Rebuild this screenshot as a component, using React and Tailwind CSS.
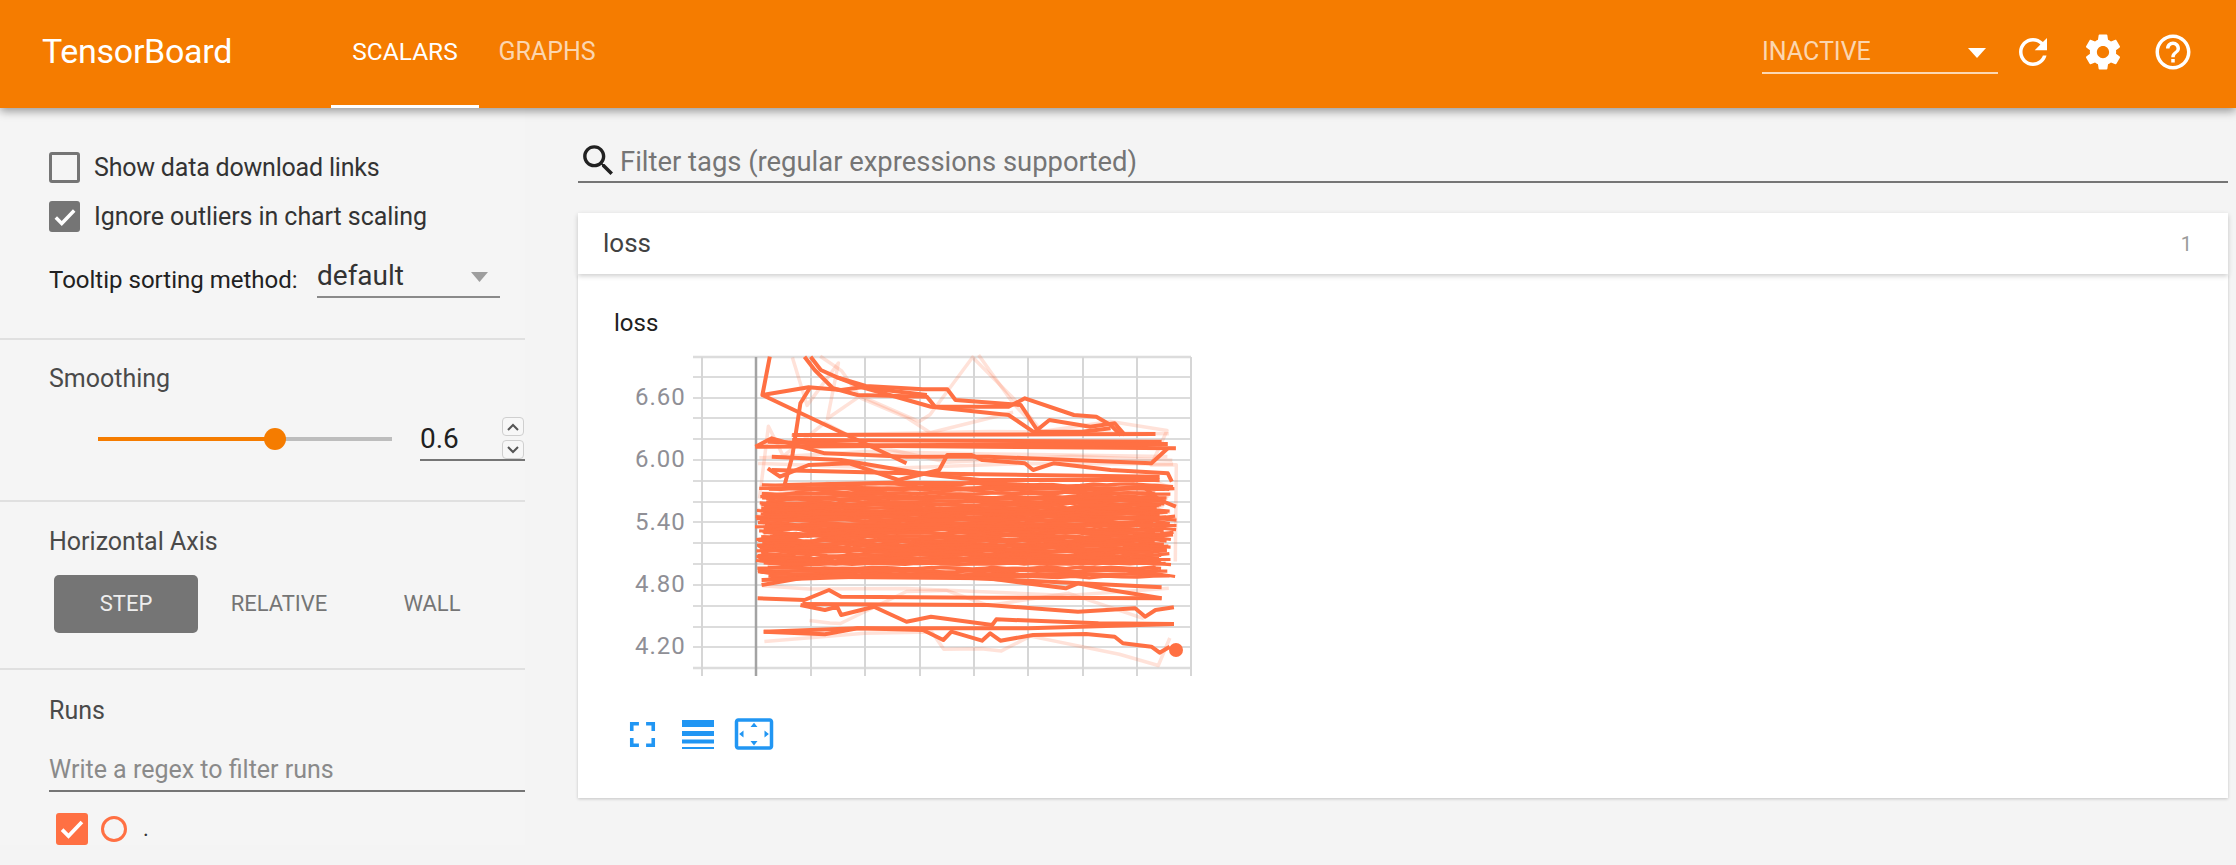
import React from "react";

const rng = (seed) => () => {
  seed |= 0; seed = (seed + 0x6d2b79f5) | 0;
  let t = Math.imul(seed ^ (seed >>> 15), 1 | seed);
  t = (t + Math.imul(t ^ (t >>> 7), 61 | t)) ^ t;
  return ((t ^ (t >>> 14)) >>> 0) / 4294967296;
};
const r = rng(42);

// traced strokes, written as [x, y] pairs in chart-space units (x / 2.45, y / 3)
const traced = [
  [465,170,447,285,560,262,640,270,690,262,850,285],
  [447,285,800,490],
  [550,170,575,210,620,265,680,285,850,290,870,320,1050,320,1090,295,1210,345,1265,350,1300,375,1325,405],
  [565,170,590,210,630,232,700,258,840,268,900,268,920,300,1080,315,1120,390,1150,360,1250,380,1310,370,1335,405],
  [630,232,700,265,860,320,1050,345,1110,395,1230,395,1300,385],
  [565,260,540,310,520,470,500,560],
  [520,405,1410,402],[520,420,1425,425],[430,440,760,438,1460,445],[460,425,720,436,1440,432],
  [430,440,470,415,600,460,800,470,1000,470,1400,490,1440,445],
  [460,505,490,530,560,495,660,490,780,540,880,510,900,465,960,465,985,480,1090,490,1110,510,1160,490,1300,510,1440,520,1450,545],
  [470,510,800,520,1100,525,1420,530],
  [470,470,640,480,860,525,980,540,1420,540],
  [500,555,760,548,1000,550,1210,560,1225,590,1300,570,1380,560,1420,600,1460,620],
  [435,895,550,900,610,870,640,890,1000,893,1425,895],
  [540,915,600,930,630,920,640,945,720,920,800,965,860,950,1010,975,1020,958,1270,970,1455,972],
  [545,912,1000,915,1220,935,1360,925,1385,950,1410,930,1455,922],
  [450,995,600,1003,680,985,840,990,890,1020,910,995,985,1022,1005,1000,1030,1022,1110,1005,1240,1002,1310,1010,1330,1030,1400,1040,1420,1058,1445,1040],
  [450,995,680,985,1100,985,1455,972],
  [445,855,560,830,1000,835,1190,865,1220,850,1300,870,1425,895],
  [445,840,800,825,1150,845,1425,862],
];
const band = [];
const addBand = (count, lo, hi) => {
  for (let i = 0; i < count; i++) {
    const base = lo + ((i + r() * 1.4) / count) * (hi - lo);
    const x0 = 428 + r() * 40, x1 = 1400 + r() * 62, n = 22 + Math.floor(r() * 14), pts = [];
    for (let j = 0; j <= n; j++) {
      const spike = r() < 0.08 ? 11 : 3;
      pts.push(x0 + ((x1 - x0) * j) / n, base + (r() - 0.5) * spike * 2);
    }
    band.push(pts);
  }
};
addBand(9, 550, 600);
addBand(44, 600, 790);
addBand(8, 790, 835);
const toPts = (a, jitter = 0) => {
  const out = [];
  for (let i = 0; i < a.length; i += 2)
    out.push(`${(580 + a[i] / 2.45 + (r() - 0.5) * jitter).toFixed(1)},${(300 + a[i + 1] / 3 + (r() - 0.5) * jitter * 1.6).toFixed(1)}`);
  return out.join(" ");
};
const bandLines = band.map((a) => toPts(a));
const tracedLines = traced.map((a) => toPts(a));
const ghost = [
  [520,170,560,320,630,190,610,350,690,290,830,370,860,340,960,170,1080,320,1130,400,1300,360,1440,390,1400,490,1460,500,1460,780],
  [440,590,460,380,500,470,600,370,700,430,900,480,1200,470,1450,480],
  [450,1025,700,1005,860,1000,890,1050,985,1050,1030,1060,1100,1010,1320,1070,1418,1090,1445,1010],
  [590,170,640,210,690,300,800,350,860,400,1060,330],
  [975,170,1060,320,1130,395],
  [560,965,610,970,640,965,800,870,900,870,1000,920,1200,880,1380,960],
  [450,850,560,860,800,860,1190,880,1440,860],
  [440,470,700,460,1000,455,1440,470],
  [440,490,760,500,1100,485,1450,495],
  [520,405,1000,400,1440,400],
].concat(band.slice(0, 24)).map((a) => toPts(a, 3));

const hGrid = [357,377,398,418,439,460,481,502,522,543,564,585,606,627,647,668];
const vGrid = [702,756,811,865,920,974,1028,1083,1137,1191];
const yLabels = [["6.60",396],["6.00",458],["5.40",521],["4.80",583],["4.20",645]];

const Chart = () => (
  <svg width="570" height="340" viewBox="630 350 570 340" className="ml-[52px] mt-[13px] block">
    {hGrid.map((y) => <line key={y} x1="693" x2="1191" y1={y} y2={y} stroke="#dcdcdc" strokeWidth={y === 357 || y === 668 ? 2.5 : 2} />)}
    {vGrid.map((x) => <line key={x} x1={x} x2={x} y1="357" y2="676" stroke={x === 756 ? "#a3a3a3" : "#d6d6d6"} strokeWidth={x === 756 ? 2.5 : 2} />)}
    {yLabels.map(([t, y]) => <text key={t} x="635" y={y + 9} fontFamily="Roboto, sans-serif" fontSize="24" letterSpacing="1" fill="#8f8f96">{t}</text>)}
    <g fill="none" strokeLinejoin="round">
      {ghost.map((p, i) => <polyline key={i} points={p} stroke="#ff7043" strokeOpacity="0.2" strokeWidth="3.5" />)}
      {bandLines.map((p, i) => <polyline key={i} points={p} stroke="#ff7043" strokeWidth="3.2" />)}
      {tracedLines.map((p, i) => <polyline key={i} points={p} stroke="#ff7043" strokeWidth="4" />)}
    </g>
    <circle cx="1176" cy="650" r="7" fill="#ff7043" />
  </svg>
);

const Icon = ({ d, size = 42, className = "" }) => (
  <svg width={size} height={size} viewBox="0 0 24 24" fill="currentColor" className={className}><path d={d} /></svg>
);
const Check = ({ className }) => (
  <svg viewBox="0 0 24 24" className={className} fill="none" stroke="#fff" strokeWidth="3.2"><path d="M3.5 12.5l5.5 5.5L20.5 6" /></svg>
);

export default function App() {
  return (
    <div className="h-[865px] w-[2236px] overflow-hidden bg-[#f4f4f4] font-['Roboto',sans-serif] text-[#212121]">
      <header className="relative z-20 flex h-[108px] bg-[#f57c00] text-white shadow-[0_3px_9px_rgba(0,0,0,0.4)]">
        <div className="w-[331px] pl-[42px] pt-[28px] text-[34px] leading-[46px] tracking-[-0.3px]">TensorBoard</div>
        <div className="flex h-[108px] w-[148px] justify-center border-b-[3px] border-white pt-[34px] text-[24.5px] leading-[36px]">SCALARS</div>
        <div className="flex h-[108px] w-[136px] justify-center pt-[34px] text-[25px] leading-[36px] text-white/70">GRAPHS</div>
        <div className="ml-auto mt-[30px] flex h-[44px] w-[236px] items-start justify-between border-b-2 border-white/70 pr-[12px] text-[25px] leading-[36px] text-white/70">
          <span className="mt-[4px]">INACTIVE</span>
          <svg width="18" height="10" viewBox="0 0 18 10" className="mt-[18px]"><path d="M0 0h18L9 10z" fill="#fff" /></svg>
        </div>
        <div className="flex w-[70px] justify-center pt-[31px]"><Icon d="M17.65 6.35C16.2 4.9 14.21 4 12 4c-4.42 0-7.99 3.58-7.99 8s3.57 8 7.99 8c3.73 0 6.84-2.55 7.73-6h-2.08c-.82 2.33-3.04 4-5.65 4-3.31 0-6-2.69-6-6s2.69-6 6-6c1.66 0 3.14.69 4.22 1.78L13 11h7V4l-2.35 2.35z" /></div>
        <div className="flex w-[70px] justify-center pt-[31px]"><Icon d="M19.43 12.98c.04-.32.07-.64.07-.98s-.03-.66-.07-.98l2.11-1.65c.19-.15.24-.42.12-.64l-2-3.46c-.12-.22-.39-.3-.61-.22l-2.49 1c-.52-.4-1.08-.73-1.69-.98l-.38-2.65C14.46 2.18 14.25 2 14 2h-4c-.25 0-.46.18-.49.42l-.38 2.65c-.61.25-1.17.59-1.69.98l-2.49-1c-.23-.09-.49 0-.61.22l-2 3.46c-.13.22-.07.49.12.64l2.11 1.65c-.04.32-.07.65-.07.98s.03.66.07.98l-2.11 1.65c-.19.15-.24.42-.12.64l2 3.46c.12.22.39.3.61.22l2.49-1c.52.4 1.08.73 1.69.98l.38 2.65c.03.24.24.42.49.42h4c.25 0 .46-.18.49-.42l.38-2.65c.61-.25 1.17-.59 1.69-.98l2.49 1c.23.09.49 0 .61-.22l2-3.46c.12-.22.07-.49-.12-.64l-2.11-1.65zM12 15.5c-1.93 0-3.5-1.57-3.5-3.5s1.57-3.5 3.5-3.5 3.5 1.57 3.5 3.5-1.57 3.5-3.5 3.5z" /></div>
        <div className="flex w-[70px] justify-center pt-[31px]"><Icon d="M11 18h2v-2h-2v2zm1-16C6.48 2 2 6.48 2 12s4.48 10 10 10 10-4.48 10-10S17.52 2 12 2zm0 18c-4.41 0-8-3.59-8-8s3.59-8 8-8 8 3.59 8 8-3.59 8-8 8zm0-14c-2.21 0-4 1.79-4 4h2c0-1.1.9-2 2-2s2 .9 2 2c0 2-3 1.75-3 5h2c0-2.25 3-2.5 3-5 0-2.21-1.79-4-4-4z" /></div>
        <div className="w-[28px]" />
      </header>

      <div className="flex">
        <aside className="w-[525px] shrink-0 bg-[#f5f5f5] text-[25px]">
          <section className="h-[232px] border-b-2 border-[#e0e0e0] pl-[49px] pt-[44px]">
            <div className="flex h-[31px] items-center">
              <span className="h-[31px] w-[31px] rounded-[3px] border-[3px] border-[#757575]" />
              <span className="ml-[14px] tracking-[-0.2px] text-[#333]">Show data download links</span>
            </div>
            <div className="mt-[18px] flex h-[31px] items-center">
              <span className="flex h-[31px] w-[31px] items-center justify-center rounded-[3px] bg-[#757575]"><Check className="h-[26px] w-[26px]" /></span>
              <span className="ml-[14px] tracking-[-0.08px] text-[#333]">Ignore outliers in chart scaling</span>
            </div>
            <div className="mt-[24px] flex items-start">
              <span className="mt-[8px] w-[268px] text-[24px] leading-[32px] text-[#212121]">Tooltip sorting method:</span>
              <div className="flex h-[42px] w-[183px] items-start justify-between border-b-2 border-[#8a8a8a] pr-[12px] text-[28px] leading-[36px] text-[#333]">
                <span className="mt-[2px]">default</span>
                <svg width="17" height="10" viewBox="0 0 17 10" className="mt-[16px]"><path d="M0 0h17L8.5 10z" fill="#9e9e9e" /></svg>
              </div>
            </div>
          </section>

          <section className="h-[162px] border-b-2 border-[#e0e0e0] pl-[49px] pt-[25px]">
            <div className="leading-[28px] text-[#4a4a4a]">Smoothing</div>
            <div className="mt-[24px] flex items-center">
              <div className="relative ml-[49px] flex h-[4px] w-[294px]">
                <div className="w-[177px] bg-[#f57c00]" />
                <div className="flex-1 bg-[#bdbdbd]" />
                <div className="absolute left-[166px] top-[-9px] h-[22px] w-[22px] rounded-full bg-[#f57c00]" />
              </div>
              <div className="relative ml-[28px] h-[44px] w-[105px] border-b-2 border-[#757575] text-[28px] leading-[44px] text-[#212121]">
                0.6
                <div className="absolute right-[1px] top-0 flex h-[19px] w-[22px] items-center justify-center rounded-[4px] border border-[#cfcfcf] bg-[#f7f7f7]">
                  <svg width="12" height="8" viewBox="0 0 12 8" fill="none" stroke="#555" strokeWidth="2"><path d="M1 7l5-5 5 5" /></svg>
                </div>
                <div className="absolute right-[1px] top-[23px] flex h-[19px] w-[22px] items-center justify-center rounded-[4px] border border-[#cfcfcf] bg-[#f7f7f7]">
                  <svg width="12" height="8" viewBox="0 0 12 8" fill="none" stroke="#555" strokeWidth="2"><path d="M1 1l5 5 5-5" /></svg>
                </div>
              </div>
            </div>
          </section>

          <section className="h-[168px] border-b-2 border-[#e0e0e0] pt-[26px]">
            <div className="pl-[49px] leading-[28px] text-[#4a4a4a]">Horizontal Axis</div>
            <div className="mt-[19px] flex pl-[54px] text-[22px] leading-[58px]">
              <div className="h-[58px] w-[144px] rounded-[5px] bg-[#757575] text-center text-[#eeeeee]">STEP</div>
              <div className="h-[58px] w-[162px] text-center text-[#757575]">RELATIVE</div>
              <div className="h-[58px] w-[144px] text-center text-[#757575]">WALL</div>
            </div>
          </section>

          <section className="pl-[49px] pt-[27px]">
            <div className="leading-[28px] text-[#4a4a4a]">Runs</div>
            <div className="mt-[25px] h-[42px] border-b-2 border-[#757575] leading-[40px] text-[#8a8a8a]">Write a regex to filter runs</div>
            <div className="mt-[21px] flex h-[32px] items-center pl-[7px]">
              <span className="flex h-[32px] w-[32px] items-center justify-center rounded-[3px] bg-[#ff7043]"><Check className="h-[28px] w-[28px]" /></span>
              <span className="ml-[13px] h-[26px] w-[26px] rounded-full border-[3px] border-[#ff7043]" />
              <span className="ml-[16px] text-[22px] leading-[32px] text-[#333]">.</span>
            </div>
          </section>
        </aside>

        <main className="ml-[53px] mr-[8px] flex-1">
          <div className="mt-[32px] flex h-[43px] items-start border-b-2 border-[#757575]">
            <Icon d="M15.5 14h-.79l-.28-.27C15.41 12.59 16 11.11 16 9.5 16 5.91 13.09 3 9.5 3S3 5.91 3 9.5 5.91 16 9.5 16c1.61 0 3.09-.59 4.23-1.57l.27.28v.79l5 4.99L20.49 19l-4.99-5zm-6 0C7.01 14 5 11.99 5 9.5S7.01 5 9.5 5 14 7.01 14 9.5 11.99 14 9.5 14z" size={41} className="text-[#212121]" />
            <span className="ml-[1px] mt-[4px] text-[27.4px] leading-[36px] text-[#757575]">Filter tags (regular expressions supported)</span>
          </div>
          <div className="relative z-10 mt-[30px] flex h-[61px] items-center justify-between bg-white pl-[25px] pr-[36px] shadow-[0_2px_5px_rgba(0,0,0,0.2)]">
            <span className="text-[26px] text-[#424242]">loss</span>
            <span className="text-[20px] text-[#9a9a9a]">1</span>
          </div>
          <div className="h-[524px] bg-white shadow-[0_1px_3px_rgba(0,0,0,0.2)]">
            <div className="pl-[36px] pt-[35px] text-[24px] leading-[28px] text-[#212121]">loss</div>
            <Chart />
            <div className="mt-[23px] flex h-[43px] items-start pl-[43px] text-[#2196f3]">
              <Icon d="M7 14H5v5h5v-2H7v-3zm-2-4h2V7h3V5H5v5zm12 7h-3v2h5v-5h-2v3zM14 5v2h3v3h2V5h-5z" size={43} />
              <svg width="32" height="29" viewBox="0 0 32 29" fill="currentColor" className="ml-[18px] mt-[7px]">
                <rect width="32" height="7" /><rect y="11" width="32" height="5" /><rect y="19.5" width="32" height="4" /><rect y="27" width="32" height="2" />
              </svg>
              <Icon d="M12.01 5.5L10 8h4l-1.99-2.5zM18 10v4l2.5-1.99L18 10zM6 10l-2.5 2.01L6 14v-4zm8 6h-4l2.01 2.5L14 16zm7-13H3c-1.1 0-2 .9-2 2v14c0 1.1.9 2 2 2h18c1.1 0 2-.9 2-2V5c0-1.1-.9-2-2-2zm0 16.01H3V4.99h18v14.02z" size={42} className="ml-[19px]" />
            </div>
          </div>
        </main>
      </div>
    </div>
  );
}
